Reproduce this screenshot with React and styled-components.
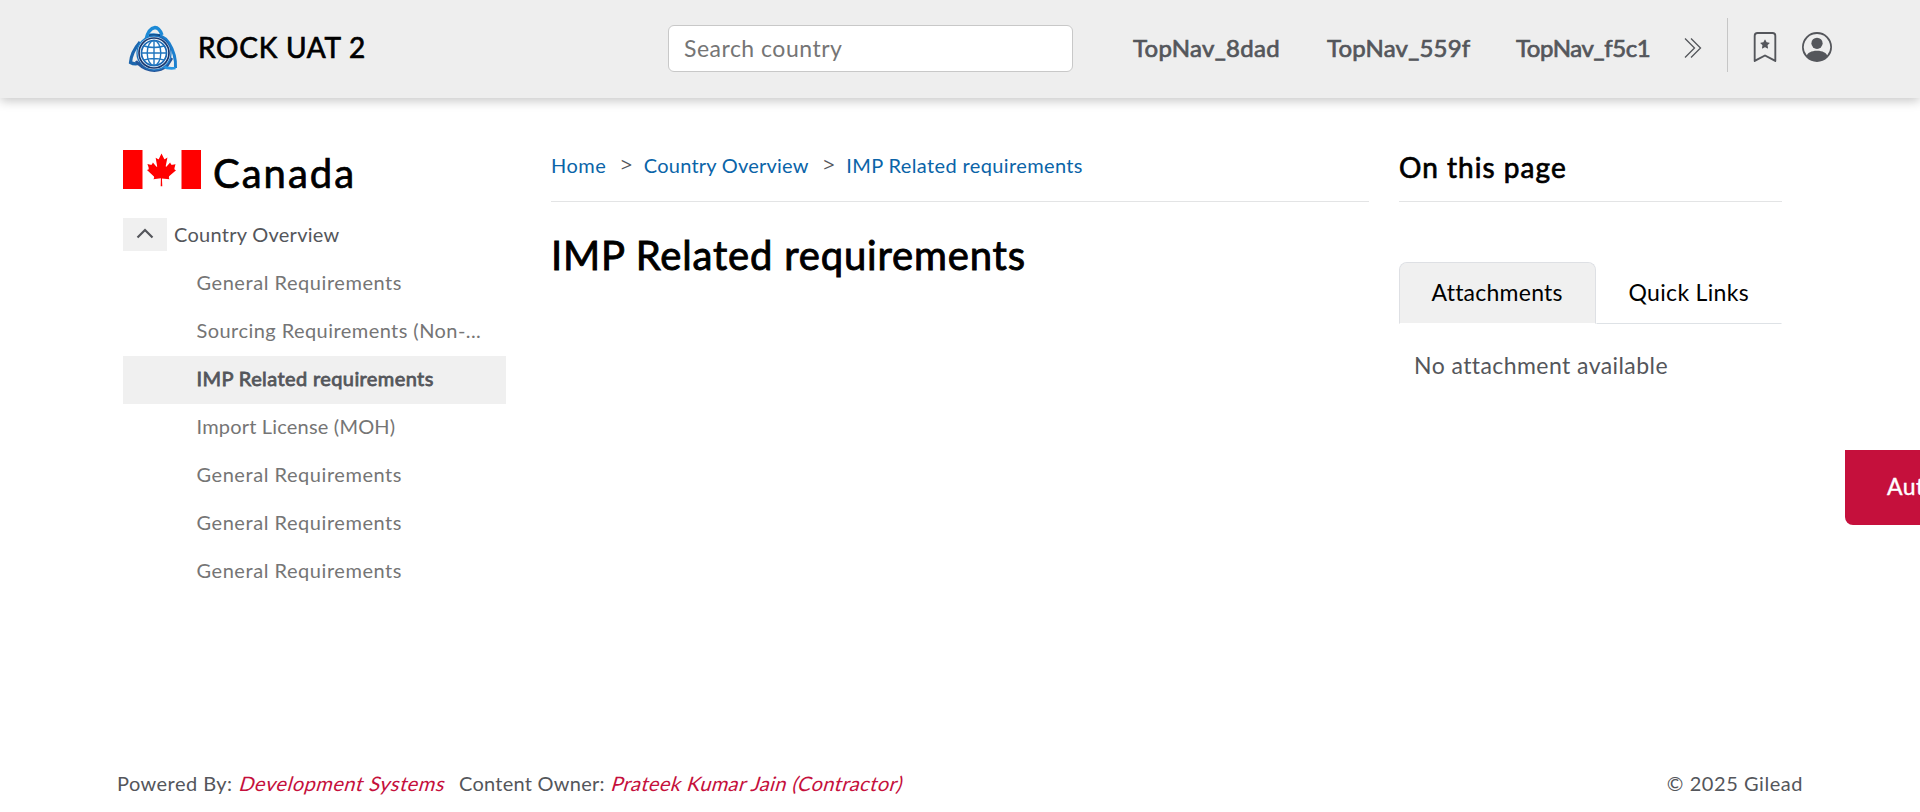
import React from "react";
import styled, { createGlobalStyle } from "styled-components";
import { BsPersonCircle, BsBookmarkStar } from "react-icons/bs";

const GlobalStyle = createGlobalStyle`
  * { box-sizing: border-box; }
  html, body { margin: 0; padding: 0; overflow: hidden; }
  body {
    font-family: Lato, "Liberation Sans", sans-serif;
    font-size: 20px;
    color: #54565b;
    background: #fff;
  }
`;

const Page = styled.div`
  display: flex;
  flex-direction: column;
  height: 812px;
`;

const Tracked = styled.span`
  letter-spacing: ${(p) => p.$track || 0}px;
  white-space: nowrap;
`;

/* header */
const Header = styled.header`
  display: flex;
  align-items: center;
  flex: none;
  height: 98px;
  padding: 0 0 1px 128px;
  background: #eee;
  box-shadow: 0 3px 10px rgba(0, 0, 0, 0.22);
`;

const Brand = styled.div`
  display: flex;
  align-items: center;
  width: 540px;
  gap: 20px;
`;

const BrandName = styled(Tracked)`
  font-size: 28px;
  line-height: 34px;
  margin-top: -3px;
  color: #000;
  -webkit-text-stroke: 0.7px #000;
`;

const Search = styled.input`
  width: 405px;
  height: 47px;
  padding: 0 15px 1px;
  border: 1px solid #c8c8c8;
  border-radius: 6px;
  background: #fff;
  font: 23px Lato, sans-serif;
  letter-spacing: 0.5px;
  outline: none;
  &::placeholder { color: #757575; opacity: 1; }
`;

const TopNav = styled.nav`
  display: flex;
  align-items: center;
  width: 551px;
  margin-left: 60px;
`;

const TopLink = styled(Tracked)`
  width: ${(p) => p.$w}px;
  font-size: 24px;
  line-height: 30px;
  margin-top: -2px;
  -webkit-text-stroke: 0.7px #54565b;
`;

const Tools = styled.div`
  display: flex;
  align-items: center;
  gap: 22px;
  height: 54px;
  margin-top: -7px;
  padding-left: 22px;
  margin-left: 25px;
  border-left: 1px solid #c6c6c6;
`;

const ToolIcon = styled.span`
  display: flex;
  margin-top: 4px;
`;

const Chevrons = styled.svg`
  display: block;
  flex: none;
  margin-top: -1px;
`;

/* body */
const Body = styled.main`
  display: grid;
  grid-template-columns: 383px 818px 383px;
  column-gap: 45px;
  flex: 1;
  padding-left: 123px;
`;

const Sidebar = styled.aside`
  padding-top: 52px;
`;

const Country = styled.div`
  display: flex;
  gap: 12px;
  height: 68px;
`;

const CountryName = styled(Tracked)`
  font-size: 40px;
  line-height: 46px;
  color: #000;
  -webkit-text-stroke: 0.7px #000;
`;

const TreeRoot = styled.div`
  display: flex;
  align-items: center;
  gap: 7px;
  height: 33px;
  margin-bottom: 9px;
`;

const RootLabel = styled(Tracked)`
  margin-top: -1px;
`;

const Toggle = styled.button`
  display: grid;
  place-items: center;
  width: 44px;
  height: 33px;
  padding: 0 0 2px;
  border: 0;
  background: #f0f0f0;
`;

const TreeItem = styled.div`
  display: flex;
  align-items: center;
  height: 48px;
  padding: 0 0 4px 73.5px;
  color: ${(p) => (p.$active ? "#54565b" : "#757575")};
  background: ${(p) => (p.$active ? "#f0f0f0" : "transparent")};
  -webkit-text-stroke: ${(p) => (p.$active ? "0.8px #54565b" : "0")};
`;

const Content = styled.section`
  padding-top: 52px;
`;

const Crumbs = styled.div`
  display: flex;
  align-items: flex-start;
  height: 52px;
  padding-top: 3px;
  line-height: 24px;
  border-bottom: 1px solid #e3e4e5;
`;

const Crumb = styled(Tracked)`
  color: #0a64a8;
`;

const Separator = styled.span`
  margin: 0 12px 0 14.5px;
  width: 11px;
  font: 20px/24px "Open Sans", sans-serif;
`;

const Title = styled.h1`
  margin: 29px 0 0;
  font-size: 40px;
  line-height: 48px;
  font-weight: 400;
  letter-spacing: 0.82px;
  white-space: nowrap;
  color: #000;
  -webkit-text-stroke: 0.9px #000;
`;

const Aside = styled.aside`
  margin-left: -15px;
  width: 383px;
  padding-top: 52px;
`;

const AsideTitle = styled.h2`
  height: 52px;
  margin: 0;
  font-size: 28px;
  line-height: 34px;
  font-weight: 400;
  letter-spacing: 1.03px;
  color: #000;
  border-bottom: 1px solid #e3e4e5;
  -webkit-text-stroke: 0.7px #000;
`;

const Tabs = styled.div`
  display: flex;
  height: 62px;
  margin-top: 60px;
`;

const Tab = styled.div`
  display: flex;
  align-items: center;
  width: ${(p) => p.$w}px;
  padding: 0 0 3px 31.5px;
  font-size: 23px;
  color: #000;
  border: 1px solid ${(p) => (p.$active ? "#dee0e4" : "transparent")};
  border-bottom-color: ${(p) => (p.$active ? "#fff" : "#dee2e6")};
  border-radius: ${(p) => (p.$active ? "8px 8px 0 0" : "0")};
  background: ${(p) => (p.$active ? "#f0f0f0" : "transparent")};
  background-clip: padding-box;
`;

const Empty = styled.p`
  margin: 26px 0 0 15px;
  font-size: 23px;
  line-height: 30px;
  letter-spacing: 0.43px;
`;

const Ribbon = styled.div`
  position: fixed;
  top: 450px;
  left: 1845px;
  width: 160px;
  height: 75px;
  padding-left: 42px;
  border-radius: 0 0 8px 8px;
  background: #c5103c;
  color: #fff;
  font-size: 23px;
  line-height: 73px;
  letter-spacing: 0.4px;
  -webkit-text-stroke: 0.4px #fff;
`;

const Footer = styled.footer`
  display: flex;
  justify-content: space-between;
  flex: none;
  height: 42px;
  padding: 0 117px;
  line-height: 26px;
`;

const Credits = styled.div`
  display: flex;
`;

const Owner = styled(Tracked)`
  display: block;
  margin: 0 ${(p) => p.$gap || 0}px 0 5px;
  transform: skewX(-16deg);
  color: #c5103c;
`;

const items = [
  ["General Requirements", 0.55],
  ["Sourcing Requirements (Non-...", 0.44],
  ["IMP Related requirements", 0.4, true],
  ["Import License (MOH)", 0.19],
  ["General Requirements", 0.55],
  ["General Requirements", 0.55],
  ["General Requirements", 0.55],
];

function Logo() {
  return (
    <svg width="50" height="48" viewBox="0 0 50 48" fill="none">
      <defs>
        <linearGradient id="band" x1="0" y1="0" x2="1" y2="1">
          <stop offset="0" stopColor="#1d8fdc" />
          <stop offset="0.5" stopColor="#1b5ea8" />
          <stop offset="1" stopColor="#2590dc" />
        </linearGradient>
      </defs>
      <path d="M17.500 16C19 9 22 3 27 2.500C30.500 2.500 32.500 6 34 10" stroke="#1c8ad6" strokeWidth="3.400" />
      <path d="M22 10C30 8.500 37 12 41 18C46 26 48 34 47.500 43" stroke="#1c7fce" strokeWidth="3" />
      <path d="M21 10.500H32" stroke="#123f78" strokeWidth="2.400" />
      <path d="M12 17C6 24 3 31 2.500 37.500C6 39.500 10 39 14 37.500" stroke="#1b65ad" strokeWidth="3.200" />
      <path d="M8 36C15 46 29 49 39 41L44 33" stroke="#24569a" strokeWidth="2.600" />
      <path d="M47.500 43C43 44 38 43 34 41" stroke="#2795e2" strokeWidth="2.800" />
      <circle cx="26" cy="28" r="17" fill="#f3f8fd" stroke="url(#band)" strokeWidth="1.300" />
      <circle cx="26" cy="28" r="15" stroke="#17366d" strokeWidth="1.700" />
      <circle cx="26" cy="28" r="12.500" fill="#fff" stroke="#1c69b4" strokeWidth="1.700" />
      <g stroke="#2176bf" strokeWidth="1.400">
        <ellipse cx="26" cy="28" rx="6.800" ry="12.500" />
        <path d="M26 15.500V40.500M13.500 28H38.500M16 21Q26 24 36 21M16 35Q26 32 36 35" />
      </g>
    </svg>
  );
}

function Flag() {
  return (
    <svg width="78" height="39" viewBox="0 0 78 39">
      <path fill="#f00" d="M0 0h19.500v39H0zM58.500 0H78v39H58.500z" />
      <g transform="translate(2.600 -7.700) scale(.1138 .1175)">
        <path
          fill="#f00"
          d="m201 232-13.300 4.400 61.400 54c4.700 13.700-1.600 17.800-5.600 25l66.600-8.400-1.600 67 13.900-.3-3.100-66.600 66.700 8c-4.100-8.700-7.800-13.300-4-27.200l61.300-51-10.700-4c-8.800-6.800 3.800-32.600 5.600-48.900 0 0-35.700 12.300-38 5.800l-9.200-17.500-32.600 35.800c-3.500.9-5-.5-5.900-3.500l15-74.800-23.800 13.400c-2 .9-4 .1-5.200-2.200l-23-46-23.600 47.800c-1.800 1.700-3.600 1.900-5 .7L264 130.800l13.700 74.100c-1.100 3-3.700 3.800-6.700 2.200l-31.200-35.300c-4 6.500-6.800 17.100-12.200 19.500-5.400 2.300-23.500-4.500-35.600-7 4.200 14.800 17 39.600 9 47.700"
        />
      </g>
    </svg>
  );
}

export default function App() {
  return (
    <Page>
      <GlobalStyle />
      <Header>
        <Brand>
          <Logo />
          <BrandName $track={0.75}>ROCK UAT 2</BrandName>
        </Brand>
        <Search placeholder="Search country" />
        <TopNav>
          <TopLink $w={194} $track={0.3}>TopNav_8dad</TopLink>
          <TopLink $w={189} $track={0.2}>TopNav_559f</TopLink>
          <TopLink $w={168} $track={-0.4}>TopNav_f5c1</TopLink>
        </TopNav>
        <Chevrons width="18" height="22" viewBox="0 0 18 22">
          <path d="M1 1.500 10.500 11 1 20.500M7 1.500 16.500 11 7 20.500" fill="none" stroke="#54565b" strokeWidth="1.300" />
        </Chevrons>
        <Tools>
          <ToolIcon><BsBookmarkStar size={30} color="#54565b" /></ToolIcon>
          <ToolIcon><BsPersonCircle size={30} color="#54565b" /></ToolIcon>
        </Tools>
      </Header>
      <Body>
        <Sidebar>
          <Country>
            <Flag />
            <CountryName $track={2}>Canada</CountryName>
          </Country>
          <TreeRoot>
            <Toggle>
              <svg width="18" height="11" viewBox="0 0 18 11">
                <path d="M1.500 9.500 9 2l7.500 7.500" fill="none" stroke="#54565b" strokeWidth="2.200" />
              </svg>
            </Toggle>
            <RootLabel $track={0.27}>Country Overview</RootLabel>
          </TreeRoot>
          {items.map(([label, track, active], i) => (
            <TreeItem key={i} $active={active}>
              <Tracked $track={track}>{label}</Tracked>
            </TreeItem>
          ))}
        </Sidebar>
        <Content>
          <Crumbs>
            <Crumb $track={0.5}>Home</Crumb>
            <Separator>&gt;</Separator>
            <Crumb $track={0.23}>Country Overview</Crumb>
            <Separator>&gt;</Separator>
            <Crumb $track={0.38}>IMP Related requirements</Crumb>
          </Crumbs>
          <Title>IMP Related requirements</Title>
        </Content>
        <Aside>
          <AsideTitle>On this page</AsideTitle>
          <Tabs>
            <Tab $w={197} $active><Tracked $track={0.25}>Attachments</Tracked></Tab>
            <Tab $w={186}><Tracked $track={0.33}>Quick Links</Tracked></Tab>
          </Tabs>
          <Empty>No attachment available</Empty>
        </Aside>
      </Body>
      <Footer>
        <Credits>
          <Tracked $track={0.45}>Powered By:</Tracked>
          <Owner $gap={16} $track={0.53}>Development Systems</Owner>
          <Tracked $track={0.25}>Content Owner:</Tracked>
          <Owner $track={0.43}>Prateek Kumar Jain (Contractor)</Owner>
        </Credits>
        <Tracked $track={0.55}>© 2025 Gilead</Tracked>
      </Footer>
      <Ribbon>Authoring</Ribbon>
    </Page>
  );
}
